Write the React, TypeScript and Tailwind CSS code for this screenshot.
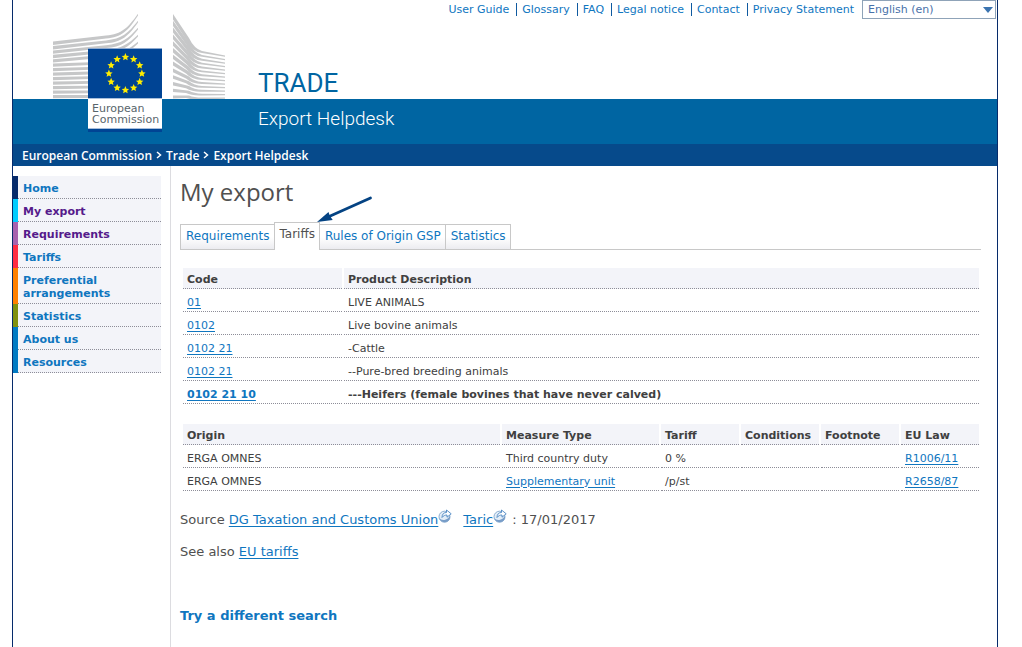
import { useState } from "react"

const TOP_LINKS = ["User Guide", "Glossary", "FAQ", "Legal notice", "Contact", "Privacy Statement"]

const CRUMBS = ["European Commission", "Trade", "Export Helpdesk"]

const MENU = [
  { label: "Home", bar: "border-[#062b6b]", text: "text-[#0f76bf]" },
  { label: "My export", bar: "border-[#00ccff]", text: "text-[#551a8b]" },
  { label: "Requirements", bar: "border-[#a862ae]", text: "text-[#551a8b]" },
  { label: "Tariffs", bar: "border-[#ff2d44]", text: "text-[#0f76bf]" },
  { label: "Preferential arrangements", bar: "border-[#ff8000]", text: "text-[#0f76bf]" },
  { label: "Statistics", bar: "border-[#80910f]", text: "text-[#0f76bf]" },
  { label: "About us", bar: "border-[#007ac3]", text: "text-[#0f76bf]" },
  { label: "Resources", bar: "border-[#007ac3]", text: "text-[#0f76bf]" },
]

const TABS = ["Requirements", "Tariffs", "Rules of Origin GSP", "Statistics"]

const PRODUCTS = [
  { code: "01", description: "LIVE ANIMALS" },
  { code: "0102", description: "Live bovine animals" },
  { code: "0102 21", description: "-Cattle" },
  { code: "0102 21", description: "--Pure-bred breeding animals" },
  { code: "0102 21 10", description: "---Heifers (female bovines that have never calved)", bold: true },
]

const MEASURES = [
  { origin: "ERGA OMNES", type: "Third country duty", tariff: "0 %", law: "R1006/11" },
  { origin: "ERGA OMNES", type: "Supplementary unit", link: true, tariff: "/p/st", law: "R2658/87" },
]

const STARS = Array.from({ length: 12 }, (_, i) => {
  const angle = (i * Math.PI) / 6
  return { x: 125.4 + 16.5 * Math.sin(angle), y: 73.5 - 16.5 * Math.cos(angle) }
})

const TH = "h-[21px] border-b border-dotted border-[#8d8d98] bg-[#f3f4f9] px-1 pt-[2px] text-left font-bold"
const TD = "h-[21px] border-b border-dotted border-[#8d8d98] px-1 pt-[2px]"
const LINK = "text-[#0f76bf] underline underline-offset-2"

function Logo() {
  return (
    <div className="relative z-10 h-[132px] w-[178px] shrink-0">
      <svg viewBox="50 0 178 132" className="h-full w-full" aria-hidden="true">
        <g fill="#c6c7c8">
          {/* left wing, the upper bands sweep up past the flag */}
          {Array.from({ length: 5 }, (_, i) => {
            const a = 41.6 + i * 4.4
            const b = 35.6 + i * 4.8
            const c = 13.8 + i * 7
            return (
              <path
                key={i}
                d={`M53 ${a} L106 ${b} C122 ${b - 1.5} 128 ${c + 14 - i * 1.5} 138 ${c} V${c + 1.6} C128 ${c + 17 - i * 1.5} 122 ${b + 1.6} 106 ${b + 2.8} L53 ${a + 3.4} Z`}
              />
            )
          })}
          {Array.from({ length: 8 }, (_, i) => {
            const y = 63.6 + i * 4.5
            return <path key={i} d={`M53 ${y} L90 ${y - 1.4 + i * 0.2} v2.800 L53 ${y + 3.1} Z`} />
          })}
          {/* right wing */}
          {Array.from({ length: 13 }, (_, i) => {
            const y = 14 + i * 6.8
            const k = 1 - i / 12
            const end = 55.6 + i * 3.5
            return (
              <path
                key={i}
                d={`M173 ${y} L189 ${y + 24 * k} Q194 ${end - 7 * k} 202 ${end - 4.5 * k} L225 ${end} v1.200 L202 ${end - 4.5 * k + 1.8} Q192 ${end - 6 * k + 2.4} 186 ${y + 23 * k + 2.4} L173 ${y + 3 + 2.4 * k} Z`}
              />
            )
          })}
        </g>
        <path fill="#0065a2" d="M50 99h178v33H50z" />
        <path fill="#8da9cf" d="M88 48h74v50H88z" />
        <path fill="#004494" d="M88 49h74v49H88z" />
        <path fill="#fff" d="M88 99h74v29H88z" />
        <path fill="#a8bfdc" d="M88 98h74v1H88zM88 128h74v1H88z" />
        <path fill="#004494" d="M88 129h74v4H88z" />
        {STARS.map((star, i) => (
          <path
            key={i}
            fill="#ffed00"
            transform={`translate(${star.x} ${star.y})`}
            d="M0-3.900 1.100-1.300 3.700-1.100 1.700.7 2.300 3.200 0 1.900-2.300 3.200-1.700.7-3.700-1.100-1.100-1.300Z"
          />
        ))}
      </svg>
      <p className="absolute top-[103px] left-[42px] text-[11px] leading-[11px] text-[#58656b]">
        European
        <br />
        Commission
      </p>
    </div>
  )
}

function ExternalIcon() {
  return (
    <svg viewBox="0 0 14 14" className="mr-px mb-px inline-block h-[14px] w-[14px] align-baseline" aria-hidden="true">
      <circle cx="6.500" cy="7.700" r="5.500" fill="#e3edf7" stroke="#8caed2" />
      <path d="M1.200 9Q3 11.500 6.500 11Q10.500 10 12 6.500Q12.500 10.500 9.500 12.500Q6.500 14 3.500 12.300Q1.500 11 1.200 9Z" fill="#789dc8" />
      <path d="M4 8.500C4 5 6 3.500 8.500 3.500V1L13.200 4.800 9 8.200V6C7 6 5.500 6.500 4 8.500Z" fill="#fff" stroke="#4b86c2" strokeWidth=".9" />
    </svg>
  )
}

export default function App() {
  const [active, setActive] = useState("Tariffs")

  return (
    <div className="min-h-screen bg-white px-3 font-['Verdana','DejaVu_Sans',sans-serif] text-[11px] leading-[13px] text-[#404040]">
      <div className="mr-3 flex min-h-screen flex-col border-x border-[#062b6b]">
        <header>
          <div className="relative flex h-[144px] bg-[linear-gradient(to_bottom,#fff_99px,#0065a2_99px)] pl-[37px]">
            <Logo />
            <div className="flex flex-col pl-[30px] font-['Roboto',sans-serif]">
              <span className="mt-[67px] text-[26px] leading-[33px] text-[#0065a2]">TRADE</span>
              <span className="mt-[3px] text-[19px] leading-[32px] font-light text-white">Export Helpdesk</span>
            </div>
            <div className="absolute top-0 right-px flex items-start">
              <nav className="mt-[3px] mr-2 flex">
                {TOP_LINKS.map((link, i) => (
                  <a
                    key={link}
                    href="#"
                    className={`text-[#0f76bf] ${i > 0 ? "border-l border-[#0f5aa0] pl-[5px]" : ""} ${i < TOP_LINKS.length - 1 ? "mr-[7px]" : ""}`}
                  >
                    {link}
                  </a>
                ))}
              </nav>
              <div className="relative">
                <select
                  aria-label="Language"
                  className="h-[19px] w-[134px] appearance-none border border-[#8fa3b8] bg-white pl-[5px] text-[11px] text-[#4871a9]"
                >
                  <option>English (en)</option>
                </select>
                <svg viewBox="0 0 10 6" className="pointer-events-none absolute top-[7px] right-[3px] h-[6px] w-[10px]" aria-hidden="true">
                  <path d="M0 0h10L5 6z" fill="#3c74b0" />
                </svg>
              </div>
            </div>
          </div>
          <nav aria-label="Breadcrumb" className="flex h-[22px] items-center gap-1 bg-[#064a8b] pl-[9px] font-['Open_Sans',sans-serif] text-[12px] font-semibold text-white">
            {CRUMBS.map((crumb, i) => (
              <span key={crumb} className="flex items-center gap-1">
                {i > 0 && (
                  <svg viewBox="0 0 6 8" className="h-2 w-[6px]" fill="none" stroke="#fff" strokeWidth="1.500" aria-hidden="true">
                    <path d="M1 1l3.500 3L1 7" />
                  </svg>
                )}
                <a href="#">{crumb}</a>
              </span>
            ))}
          </nav>
        </header>

        <div className="flex grow">
          <aside className="w-[158px] shrink-0 border-r border-[#dcdce0] pt-[10px] pr-[9px]">
            <ul>
              {MENU.map((item) => (
                <li key={item.label} className={`border-l-5 ${item.bar}`}>
                  <a
                    href="#"
                    className={`block border-b border-dotted border-[#8d8d98] bg-[#f3f4f9] pt-[6px] pr-4 pb-[3px] pl-[5px] font-bold ${item.text}`}
                  >
                    {item.label}
                  </a>
                </li>
              ))}
            </ul>
          </aside>

          <main className="grow pr-4 pl-[9px]">
            <h1 className="mt-[10px] font-['Open_Sans',sans-serif] text-[24px] leading-8 text-[#505050]">My export</h1>

            <div className="relative mt-[14px] flex items-end border-b border-[#c8c8c8]" role="tablist">
              {TABS.map((tab) => (
                <button
                  key={tab}
                  type="button"
                  role="tab"
                  aria-selected={tab === active}
                  onClick={() => setActive(tab)}
                  className={
                    tab === active
                      ? "-mb-px -ml-px h-[28px] border border-b-0 border-[#c8c8c8] bg-white px-1 pb-1 text-[12px] text-[#505050]"
                      : "-ml-px h-[25px] border border-b-0 border-[#c8c8c8] bg-linear-to-b from-white from-50% to-[#ececf0] pr-1 pb-[2px] pl-[5px] text-[12px] text-[#0f76bf] first:ml-0 first:pr-[5px]"
                  }
                >
                  {tab}
                </button>
              ))}
              <svg viewBox="0 0 56 28" className="pointer-events-none absolute bottom-[26px] left-[137px] h-[28px] w-[56px]" aria-hidden="true">
                <path d="M53.500 3 11 22" stroke="#044383" strokeWidth="2.800" strokeLinecap="round" />
                <path d="M0 27 11.500 17l1.200 3.500 3 4.500z" fill="#044383" />
              </svg>
            </div>

            <div className="pl-px">
              <table className="mt-4 w-full table-fixed border-separate border-spacing-[2px]">
                <colgroup>
                  <col className="w-[159px]" />
                  <col />
                </colgroup>
                <thead>
                  <tr>
                    <th className={TH}>Code</th>
                    <th className={TH}>Product Description</th>
                  </tr>
                </thead>
                <tbody>
                  {PRODUCTS.map((row) => (
                    <tr key={row.description} className={row.bold ? "font-bold" : ""}>
                      <td className={TD}>
                        <a href="#" className={LINK}>{row.code}</a>
                      </td>
                      <td className={TD}>{row.description}</td>
                    </tr>
                  ))}
                </tbody>
              </table>

              <table className="mt-4 w-full table-fixed border-separate border-spacing-[2px]">
                <colgroup>
                  <col />
                  <col className="w-[157px]" />
                  <col className="w-[78px]" />
                  <col className="w-[78px]" />
                  <col className="w-[78px]" />
                  <col className="w-[78px]" />
                </colgroup>
                <thead>
                  <tr>
                    <th className={TH}>Origin</th>
                    <th className={TH}>Measure Type</th>
                    <th className={TH}>Tariff</th>
                    <th className={TH}>Conditions</th>
                    <th className={TH}>Footnote</th>
                    <th className={TH}>EU Law</th>
                  </tr>
                </thead>
                <tbody>
                  {MEASURES.map((row) => (
                    <tr key={row.law}>
                      <td className={TD}>{row.origin}</td>
                      <td className={TD}>{row.link ? <a href="#" className={LINK}>{row.type}</a> : row.type}</td>
                      <td className={TD}>{row.tariff}</td>
                      <td className={TD} />
                      <td className={TD} />
                      <td className={TD}>
                        <a href="#" className={LINK}>{row.law}</a>
                      </td>
                    </tr>
                  ))}
                </tbody>
              </table>
            </div>

            <div className="mt-4 text-[13px] leading-5 text-[#505050]">
              <p>
                Source <a href="#" className={LINK}>DG Taxation and Customs Union</a>
                <ExternalIcon />
                <a href="#" className={`${LINK} ml-[10px]`}>Taric</a>
                <ExternalIcon /> : 17/01/2017
              </p>
              <p className="mt-3">
                See also <a href="#" className={LINK}>EU tariffs</a>
              </p>
              <p className="mt-11">
                <a href="#" className="font-bold text-[#0f76bf]">Try a different search</a>
              </p>
            </div>
          </main>
        </div>
      </div>
    </div>
  )
}
